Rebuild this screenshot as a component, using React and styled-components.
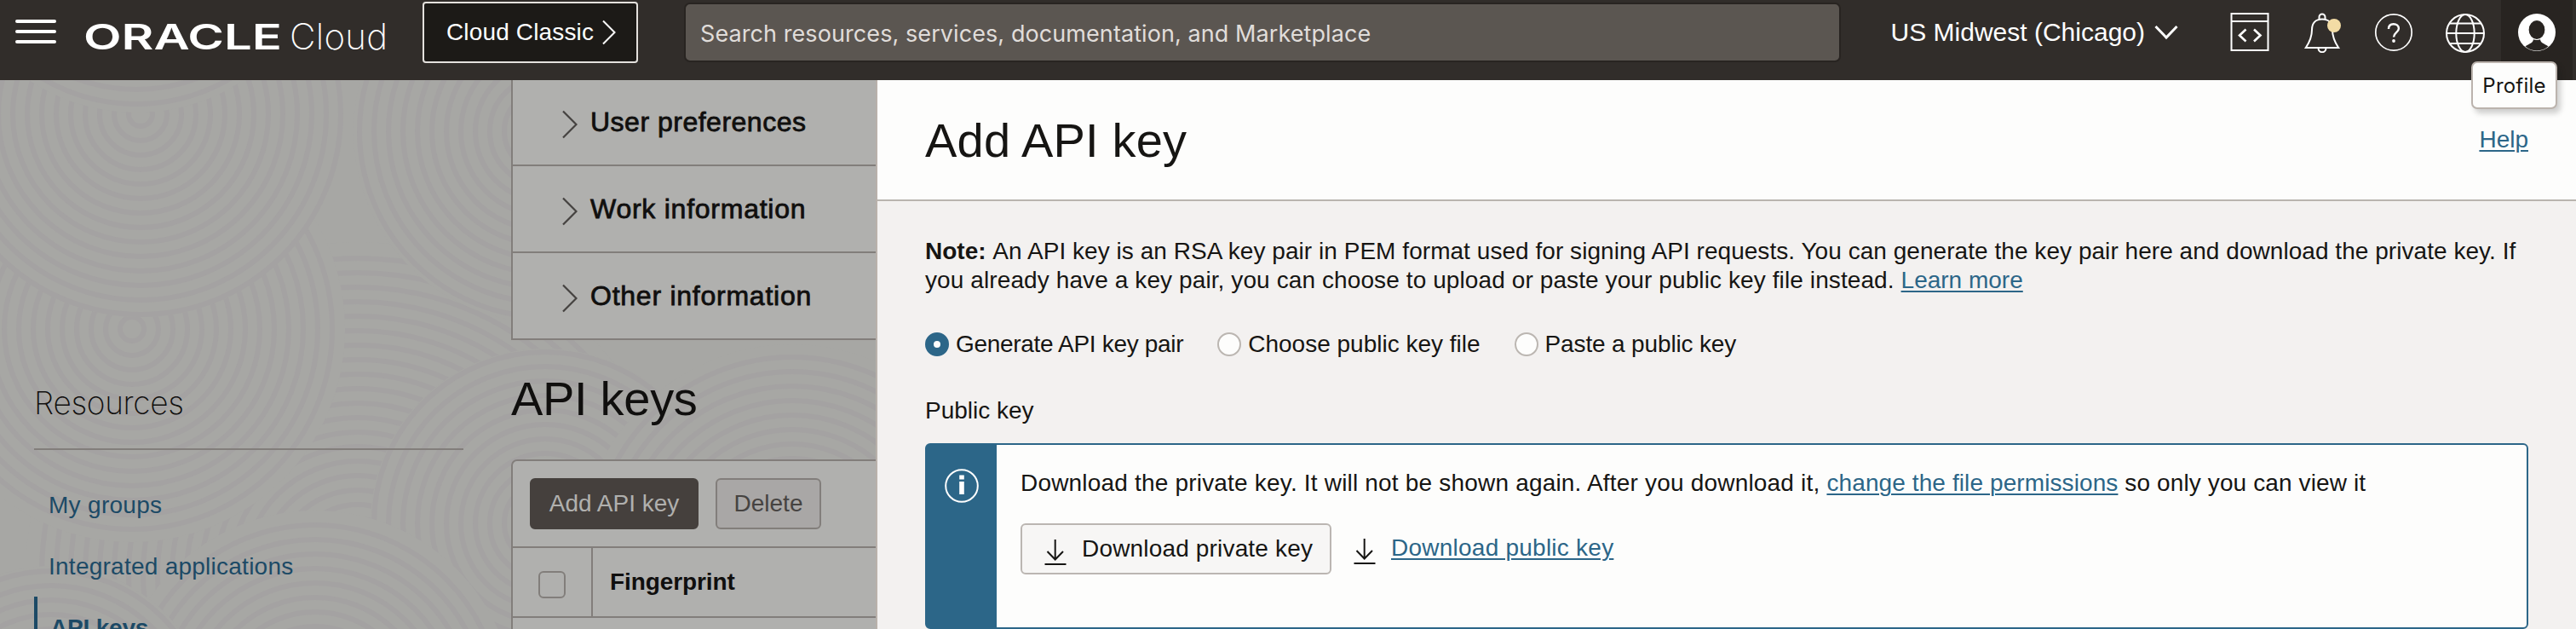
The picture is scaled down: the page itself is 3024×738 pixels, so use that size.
import React from "react";
import styled, { createGlobalStyle } from "styled-components";

const GlobalStyle = createGlobalStyle`
  *, *::before, *::after { box-sizing: border-box; }
  html, body { margin: 0; padding: 0; }
  body {
    font-family: "Liberation Sans", Arial, sans-serif;
    font-size: 28px;
    color: #161513;
    background: #f3f1f0;
    overflow: hidden;
  }
`;

const tracked = ({ $tracking = 0 }) => `letter-spacing: ${$tracking}px;`;

const Page = styled.div`
  width: 3024px;
  height: 738px;
  display: flex;
  flex-direction: column;
  overflow: hidden;
`;

/* ---------- Top bar ---------- */

const TopBar = styled.header`
  display: flex;
  align-items: flex-start;
  height: 94px;
  flex: none;
  padding: 0 4px 0 18px;
  background: #312d2a;
  color: #fff;
`;

const BarCell = styled.div`
  display: flex;
  align-items: center;
  height: 76px;
`;

const MenuButton = styled(BarCell)`
  flex-direction: column;
  justify-content: center;
  gap: 8px;
  width: 48px;
  height: 74px;
  margin-right: 34px;
`;

const MenuLine = styled.span`
  width: 48px;
  height: 4px;
  border-radius: 2px;
  background: #fff;
`;

const LogoSvg = styled.svg`
  display: block;
  width: 360px;
  height: 76px;
  margin-right: 36px;
  overflow: visible;
`;

const ClassicButton = styled.button`
  display: flex;
  align-items: center;
  gap: 9px;
  width: 253px;
  height: 72px;
  margin: 2px 54px 0 0;
  padding: 0 0 0 26px;
  border: 2px solid #e4e1dd;
  border-radius: 4px;
  background: #1c1a17;
  color: #fff;
  font: 28px "Liberation Sans", Arial, sans-serif;
  white-space: nowrap;
  ${tracked}
`;

const SearchBox = styled.div`
  display: flex;
  align-items: center;
  width: 1358px;
  height: 70px;
  margin-top: 3px;
  padding: 2px 0 0 17px;
  border: 2px solid #282421;
  border-radius: 7px;
  background: #5b5651;
  color: #e0ddda;
  font-family: Inter, sans-serif;
  font-size: 27px;
  ${tracked}
`;

const Region = styled(BarCell)`
  gap: 11px;
  margin-left: auto;
  margin-right: 61px;
  font-size: 30px;
  white-space: nowrap;
  ${tracked}
`;

const IconRow = styled(BarCell)`
  gap: 36px;
  margin-right: 18px;
`;

const BarIcon = styled.svg`
  display: block;
  width: 48px;
  height: 48px;
  fill: none;
  stroke: #fff;
  stroke-width: 2;
`;

const ProfileCell = styled.div`
  position: relative;
  display: flex;
  justify-content: center;
  width: 84px;
  height: 94px;
  padding-top: 14px;
  background: #282421;
`;

const Tooltip = styled.div`
  position: absolute;
  z-index: 2;
  left: -35px;
  top: 72px;
  display: flex;
  align-items: center;
  justify-content: center;
  width: 101px;
  height: 56px;
  border: 2px solid #bbb3ad;
  border-radius: 7px;
  background: #fdfdfc;
  color: #161513;
  font-family: Inter, sans-serif;
  font-size: 24px;
  box-shadow: 4px 5px 6px rgba(22, 21, 19, 0.2);
  ${tracked}
`;

/* ---------- Dimmed page behind the drawer ---------- */

const Body = styled.div`
  display: flex;
  height: 644px;
`;

const Dimmed = styled.div`
  position: relative;
  isolation: isolate;
  display: flex;
  width: 1028px;
  flex: none;
  overflow: hidden;
  background: #a7a7a4;
  color: #100f0e;
`;

const SwirlSvg = styled.svg`
  position: absolute;
  inset: 0;
  z-index: -1;
  width: 1028px;
  height: 644px;
`;

const SideNav = styled.nav`
  width: 600px;
  flex: none;
  padding: 353px 56px 0 40px;
`;

const SideTitle = styled.h2`
  height: 81px;
  margin: 0 0 28px;
  border-bottom: 2px solid #827e7b;
  font-family: Inter, sans-serif;
  font-size: 37px;
  font-weight: 200;
  line-height: 51px;
  ${tracked}
`;

const SideLink = styled.a`
  display: flex;
  align-items: center;
  height: 72px;
  padding: 1px 0 0 ${(p) => (p.$active ? 15 : 13)}px;
  border-left: 4px solid ${(p) => (p.$active ? "#1c4a66" : "transparent")};
  color: #1c4a66;
  font-weight: ${(p) => (p.$active ? 700 : 400)};
  ${tracked}
`;

const Content = styled.main`
  width: 428px;
`;

const Accordion = styled.div`
  border-left: 2px solid #827e7b;
  background: #b0b0ae;
`;

const AccordionRow = styled.div`
  display: flex;
  align-items: center;
  gap: 15px;
  height: ${(p) => (p.$first ? 101 : 102)}px;
  padding-left: 58px;
  border-bottom: 2px solid #827e7b;
  font-size: 32px;
  -webkit-text-stroke: 0.8px #100f0e;
  white-space: nowrap;
  ${tracked}
`;

const RowChevron = styled.svg`
  width: 18px;
  height: 34px;
  margin-top: 5px;
  fill: none;
  stroke: #454240;
  stroke-width: 2.2;
`;

const SectionTitle = styled.h1`
  margin: 0;
  height: 140px;
  font-size: 56px;
  font-weight: 400;
  line-height: 138px;
  ${tracked}
`;

const TablePanel = styled.section`
  width: 460px;
  height: 240px;
  border: 2px solid #827e7b;
  border-radius: 7px;
  background: #b0b0ae;
`;

const TableToolbar = styled.div`
  display: flex;
  gap: 20px;
  height: 102px;
  padding: 20px;
  border-bottom: 2px solid #827e7b;
`;

const ToolButton = styled.button`
  width: ${(p) => (p.$primary ? 198 : 124)}px;
  height: 60px;
  padding: 0;
  border: 2px solid ${(p) => (p.$primary ? "#45403d" : "#827e7b")};
  border-radius: 6px;
  background: ${(p) => (p.$primary ? "#45403d" : "#a9a7a6")};
  color: ${(p) => (p.$primary ? "#b0b0ae" : "#464341")};
  font: 28px "Liberation Sans", Arial, sans-serif;
`;

const TableHead = styled.div`
  display: flex;
  height: 82px;
  border-bottom: 2px solid #827e7b;
`;

const CheckCell = styled.div`
  width: 94px;
  padding: 27px 0 0 30px;
  border-right: 2px solid #827e7b;
`;

const CheckBox = styled.div`
  width: 32px;
  height: 32px;
  border: 2px solid #827e7b;
  border-radius: 6px;
`;

const HeadCell = styled.div`
  display: flex;
  align-items: center;
  padding-left: 20px;
  font-weight: 700;
  ${tracked}
`;

/* ---------- Drawer ---------- */

const Drawer = styled.aside`
  flex: 1;
  min-width: 0;
  border-left: 2px solid #b9b1ab;
  background: #f3f1f0;
`;

const DrawerHeader = styled.div`
  display: flex;
  align-items: center;
  justify-content: space-between;
  height: 142px;
  padding: 0 56px;
  border-bottom: 2px solid #b9b5af;
  background: #fdfdfc;
`;

const DrawerTitle = styled.h1`
  margin: 0;
  font-size: 56px;
  font-weight: 400;
  ${tracked}
`;

const Link = styled.a`
  color: #2c6688;
  text-decoration: underline;
  text-decoration-thickness: 2px;
  text-underline-offset: 3px;
  ${tracked}
`;

const DrawerBody = styled.div`
  padding: 42px 56px 0;
`;

const Note = styled.p`
  margin: 0;
  line-height: 34px;
  white-space: nowrap;
`;

const Run = styled.span`
  ${tracked}
`;

const RadioGroup = styled.div`
  display: flex;
  gap: 40px;
  height: 28px;
  margin-top: 44px;
`;

const RadioOption = styled.label`
  display: flex;
  align-items: center;
  gap: 8px;
  white-space: nowrap;
  ${tracked}
`;

const RadioMark = styled.span`
  width: 28px;
  height: 28px;
  border: ${(p) => (p.$checked ? "10px solid #2c6688" : "2px solid #bbb6b1")};
  border-radius: 50%;
  background: #fdfdfc;
`;

const FieldLabel = styled.div`
  margin-top: 47px;
  line-height: 34px;
`;

const InfoBox = styled.div`
  display: flex;
  height: 218px;
  margin-top: 21px;
  border: 2px solid #2c6688;
  border-radius: 6px;
  background: #fdfdfc;
`;

const InfoSide = styled.div`
  width: 82px;
  padding: 28px 0 0 21px;
  background: #2c6688;
`;

const InfoBody = styled.div`
  padding: 28px 0 0 28px;
  line-height: 34px;
  white-space: nowrap;
`;

const Actions = styled.div`
  display: flex;
  align-items: center;
  gap: 26px;
  margin-top: 30px;
`;

const DownloadButton = styled.button`
  display: flex;
  align-items: center;
  gap: 18px;
  width: 365px;
  height: 60px;
  padding: 0 0 0 26px;
  border: 2px solid #bbb6b2;
  border-radius: 6px;
  background: #f7f6f5;
  color: #161513;
  font: 28px "Liberation Sans", Arial, sans-serif;
  ${tracked}
`;

const DownloadLink = styled.div`
  display: flex;
  align-items: center;
  gap: 18px;
  height: 60px;
  padding-bottom: 2px;
`;

const ArrowSvg = styled.svg`
  flex: none;
  width: 26px;
  height: 30px;
  margin-top: 8px;
  fill: none;
  stroke: #161513;
  stroke-width: 2;
`;

const discs = [
  { x: 420, y: 580, r: 390 },
  { x: 640, y: 60, r: 225 },
  { x: 155, y: 292, r: 250 },
  { x: 5, y: 60, r: 150 },
  { x: 165, y: 40, r: 238 },
  { x: 640, y: 520, r: 205 },
  { x: 930, y: 560, r: 250 },
  { x: 370, y: 740, r: 235 },
  { x: 60, y: 760, r: 190 },
  { x: 160, y: -190, r: 228 },
];

function Swirls() {
  return (
    <SwirlSvg viewBox="0 0 1028 644" aria-hidden="true">
      {discs.map((d, i) => (
        <g key={i} fill="none" stroke="#a4a2a2" strokeWidth="6">
          <circle cx={d.x} cy={d.y} r={d.r} fill="#a7a7a4" stroke="none" />
          {Array.from({ length: Math.floor(d.r / 17) }, (_, n) => (
            <circle key={n} cx={d.x} cy={d.y} r={(n + 1) * 17 - 3} />
          ))}
        </g>
      ))}
    </SwirlSvg>
  );
}

function DownloadIcon() {
  return (
    <ArrowSvg viewBox="0 0 26 30">
      <path d="M12.7 0V23M3.5 14L12.7 23.5L22 14" />
      <path d="M0.5 29H25.5" />
    </ArrowSvg>
  );
}

function Header() {
  return (
    <TopBar>
      <MenuButton>
        <MenuLine />
        <MenuLine />
        <MenuLine />
      </MenuButton>
      <LogoSvg viewBox="0 0 360 76" fill="#fff" fontFamily="Inter, sans-serif">
        <text x="-2" y="58" fontSize="41" fontWeight="600" textLength="233" lengthAdjust="spacingAndGlyphs">ORACLE</text>
        <text x="240" y="58" fontSize="42" fontWeight="200" textLength="115">Cloud</text>
      </LogoSvg>
      <ClassicButton $tracking={0.15}>
        Cloud Classic
        <svg width="18" height="30" viewBox="0 0 18 30" fill="none" stroke="#fff" strokeWidth="2">
          <path d="M2 1.5L15.5 15L2 28.5" />
        </svg>
      </ClassicButton>
      <SearchBox $tracking={0.08}>Search resources, services, documentation, and Marketplace</SearchBox>
      <Region>
        US Midwest (Chicago)
        <svg width="28" height="18" viewBox="0 0 28 18" fill="none" stroke="#fff" strokeWidth="3">
          <path d="M1.5 2L14 15L26.5 2" />
        </svg>
      </Region>
      <IconRow>
        <BarIcon viewBox="0 0 48 48">
          <path d="M1.5 2H44.5V45H1.5ZM1.5 11H44.5" />
          <path d="M18.5 20.5L11 27.5L18.5 34.5M28 20.5L35.5 27.5L28 34.5" strokeWidth="2.6" />
        </BarIcon>
        <BarIcon viewBox="0 0 48 48">
          <path d="M4.8 42C9.5 35 12 29 12 21C12 13 16.5 8.5 24 8.5S36 13 36 21C36 29 38.5 35 43.2 42Z" />
          <path d="M20.5 8.5V6A3.5 3.5 0 0 1 27.5 6V8.5M19.5 42.5A4.5 4.7 0 0 0 28.5 42.5" />
          <circle cx="38" cy="16" r="8" fill="#f3dca5" stroke="none" />
        </BarIcon>
        <BarIcon viewBox="0 0 48 48">
          <circle cx="24" cy="24" r="21.2" strokeWidth="1.7" />
          <path d="M18 20C18 16 20.3 14.3 23.8 14.3C27.5 14.3 29.9 16.5 29.9 19.5C29.9 24 24 24.500 24 29.500" strokeWidth="2.4" />
          <circle cx="24" cy="34" r="1.9" fill="#fff" stroke="none" />
        </BarIcon>
        <BarIcon viewBox="0 0 48 48">
          <circle cx="24" cy="25" r="22" />
          <ellipse cx="24" cy="25" rx="10.7" ry="22" />
          <path d="M2 25H46M5.500 13.500H42.500M5.500 37H42.500" />
        </BarIcon>
      </IconRow>
      <ProfileCell>
        <BarIcon viewBox="0 0 48 48">
          <circle cx="24" cy="24" r="22" fill="#fff" stroke="none" />
          <path
            d="M10.5 40.5C15 37 19.5 37 20 32L28 32C28.5 37 33 37 37.5 40.5A21 21 0 0 1 10.5 40.5Z"
            fill="#282421"
            stroke="none"
          />
          <ellipse cx="24" cy="21" rx="10" ry="11.5" fill="#282421" strokeWidth="1.2" />
        </BarIcon>
        <Tooltip $tracking={0.2}>Profile</Tooltip>
      </ProfileCell>
    </TopBar>
  );
}

const sections = [
  { label: "User preferences", tracking: 0.5 },
  { label: "Work information", tracking: 0.75 },
  { label: "Other information", tracking: 0.75 },
];

const radios = [
  { label: "Generate API key pair", tracking: -0.32, checked: true },
  { label: "Choose public key file", tracking: 0 },
  { label: "Paste a public key", tracking: -0.15 },
];

export default function App() {
  return (
    <Page>
      <GlobalStyle />
      <Header />
      <Body>
        <Dimmed>
          <Swirls />
          <SideNav>
            <SideTitle $tracking={-0.3}>Resources</SideTitle>
            <SideLink $tracking={0.3}>My groups</SideLink>
            <SideLink $tracking={0.25}>Integrated applications</SideLink>
            <SideLink $active $tracking={-0.2}>API keys</SideLink>
          </SideNav>
          <Content>
            <Accordion>
              {sections.map((s, i) => (
                <AccordionRow key={s.label} $first={i === 0} $tracking={s.tracking}>
                  <RowChevron viewBox="0 0 18 34">
                    <path d="M1 1.5L16.5 17L1 32.5" />
                  </RowChevron>
                  {s.label}
                </AccordionRow>
              ))}
            </Accordion>
            <SectionTitle $tracking={-0.3}>API keys</SectionTitle>
            <TablePanel>
              <TableToolbar>
                <ToolButton $primary>Add API key</ToolButton>
                <ToolButton>Delete</ToolButton>
              </TableToolbar>
              <TableHead>
                <CheckCell>
                  <CheckBox />
                </CheckCell>
                <HeadCell $tracking={-0.1}>Fingerprint</HeadCell>
              </TableHead>
            </TablePanel>
          </Content>
        </Dimmed>
        <Drawer>
          <DrawerHeader>
            <DrawerTitle $tracking={0.2}>Add API key</DrawerTitle>
            <Link>Help</Link>
          </DrawerHeader>
          <DrawerBody>
            <Note>
              <strong>Note:</strong>{" "}
              <Run $tracking={0.045}>
                An API key is an RSA key pair in PEM format used for signing API requests. You can generate the key
                pair here and download the private key. If
              </Run>
              <br />
              <Run $tracking={0.1}>
                you already have a key pair, you can choose to upload or paste your public key file instead.{" "}
              </Run>
              <Link>Learn more</Link>
            </Note>
            <RadioGroup>
              {radios.map((r) => (
                <RadioOption key={r.label} $tracking={r.tracking}>
                  <RadioMark $checked={r.checked} />
                  {r.label}
                </RadioOption>
              ))}
            </RadioGroup>
            <FieldLabel>Public key</FieldLabel>
            <InfoBox>
              <InfoSide>
                <svg width="40" height="40" viewBox="0 0 40 40" fill="none">
                  <circle cx="20" cy="20" r="18.8" stroke="#fff" strokeWidth="2" />
                  <path d="M17.2 7.5H22.8V12.5H17.2ZM17.2 15H22.8V30H17.2Z" fill="#fff" />
                </svg>
              </InfoSide>
              <InfoBody>
                <Run $tracking={0.19}>
                  Download the private key. It will not be shown again. After you download it,{" "}
                </Run>
                <Link $tracking={0.1}>change the file permissions</Link>
                <Run $tracking={0.12}> so only you can view it</Run>
                <Actions>
                  <DownloadButton $tracking={0.17}>
                    <DownloadIcon />
                    Download private key
                  </DownloadButton>
                  <DownloadLink>
                    <DownloadIcon />
                    <Link $tracking={0.24}>Download public key</Link>
                  </DownloadLink>
                </Actions>
              </InfoBody>
            </InfoBox>
          </DrawerBody>
        </Drawer>
      </Body>
    </Page>
  );
}
